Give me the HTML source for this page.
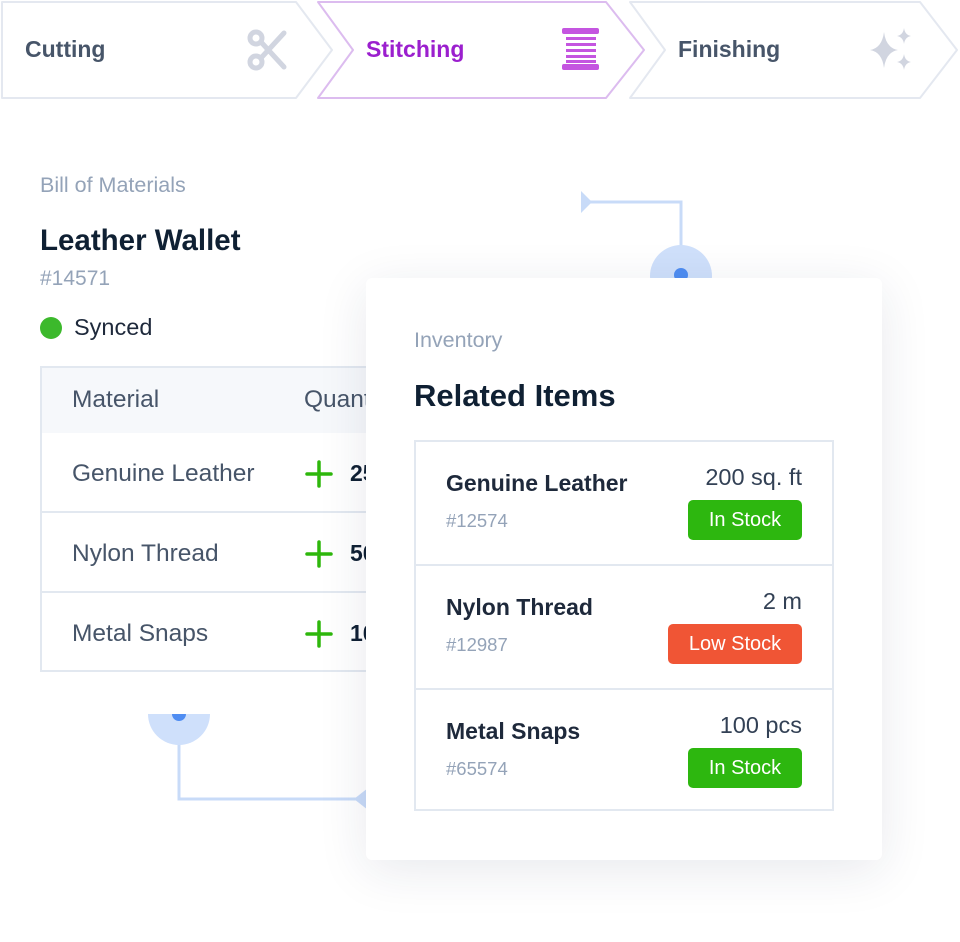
<!DOCTYPE html>
<html><head><meta charset="utf-8"><style>
body{margin:0;width:960px;height:942px;background:#fff;font-family:"Liberation Sans",sans-serif;position:relative;overflow:hidden}
.a{position:absolute;white-space:nowrap}
.t{font-size:24.5px;color:#475569}
</style></head><body>
<svg class="a" style="left:0;top:0" width="960" height="942">
<g fill="#fff" stroke-width="2" stroke-linejoin="round">
<polygon points="2,2 296,2 332,50 296,98 2,98" stroke="#e4e8f0"/>
<polygon points="318,2 606,2 644,50 606,98 318,98 353,50" stroke="#dcbcef"/>
<polygon points="630,2 920,2 957,50 920,98 630,98 665,50" stroke="#e4e8f0"/>
</g>
<g stroke="#d1d5e0" stroke-width="5" fill="none" stroke-linecap="round">
<circle cx="256" cy="38" r="6"/><circle cx="256" cy="62" r="6"/>
<line x1="261" y1="42" x2="284" y2="67"/><line x1="261" y1="58" x2="284" y2="33"/>
</g>
<g fill="#c455e0"><rect x="562" y="28" width="37" height="6" rx="2"/><rect x="562" y="64" width="37" height="6" rx="2"/>
<rect x="566" y="37" width="30" height="3"/><rect x="566" y="43" width="30" height="3"/><rect x="566" y="49" width="30" height="3"/><rect x="566" y="55" width="30" height="3"/><rect x="566" y="60" width="30" height="3"/></g>
<g fill="#d1d5e0"><path d="M884 32 Q886 48 898 50 Q886 52 884 68 Q882 52 870 50 Q882 48 884 32Z"/>
<path d="M904 28 Q905 35 911 36 Q905 37 904 44 Q903 37 897 36 Q903 35 904 28Z"/>
<path d="M904 54 Q905 61 911 62 Q905 63 904 70 Q903 63 897 62 Q903 61 904 54Z"/></g>
<g stroke="#c8dbf8" stroke-width="3" fill="none"><polyline points="590,202 681,202 681,272"/><polyline points="179,714 179,799 360,799"/></g>
<polygon points="581,191 581,213 592,202" fill="#c8dbf8"/>
<circle cx="681" cy="276" r="31" fill="#cfe0fb"/><circle cx="681" cy="275" r="7" fill="#4f8df2"/>
<path d="M148 714 A31 31 0 0 0 210 714Z" fill="#cfe0fb"/><path d="M172 714 A7 7 0 0 0 186 714Z" fill="#4f8df2"/>
<polygon points="354,799 368,788 368,810" fill="#c8dbf8"/>
<g stroke="#2eb70c" stroke-width="3.5" stroke-linecap="round">
<line x1="307" y1="474" x2="331" y2="474"/><line x1="319" y1="462" x2="319" y2="486"/>
<line x1="307" y1="554" x2="331" y2="554"/><line x1="319" y1="542" x2="319" y2="566"/>
<line x1="307" y1="634" x2="331" y2="634"/><line x1="319" y1="622" x2="319" y2="646"/>
</g>
</svg>
<div class="a" style="left:25px;top:36px;font-size:23px;font-weight:bold;color:#475569">Cutting</div>
<div class="a" style="left:366px;top:36px;font-size:23px;font-weight:bold;color:#9b1fce">Stitching</div>
<div class="a" style="left:678px;top:36px;font-size:23px;font-weight:bold;color:#475569">Finishing</div>

<div class="a" style="left:40px;top:173px;font-size:21.5px;color:#94a3b8">Bill of Materials</div>
<div class="a" style="left:40px;top:224px;font-size:29.5px;font-weight:bold;color:#0f2033">Leather Wallet</div>
<div class="a" style="left:40px;top:267px;font-size:21px;color:#94a3b8">#14571</div>
<div class="a" style="left:40px;top:317px;width:22px;height:22px;border-radius:50%;background:#3cb92c"></div>
<div class="a" style="left:74px;top:314px;font-size:23.5px;color:#1e293b">Synced</div>

<div class="a" style="left:40px;top:366px;width:400px;height:306px;border:2px solid #e2e8f0;box-sizing:border-box">
<div style="height:65px;background:#f6f8fb"></div>
<div style="height:78px;border-bottom:2px solid #e2e8f0"></div>
<div style="height:78px;border-bottom:2px solid #e2e8f0"></div>
</div>
<div class="a t" style="left:72px;top:386px">Material</div>
<div class="a t" style="left:304px;top:386px">Quantity</div>
<div class="a t" style="left:72px;top:460px">Genuine Leather</div>
<div class="a t" style="left:72px;top:540px">Nylon Thread</div>
<div class="a t" style="left:72px;top:620px">Metal Snaps</div>
<div class="a" style="left:350px;top:460px;font-size:23px;font-weight:bold;color:#0f2033">25</div>
<div class="a" style="left:350px;top:540px;font-size:23px;font-weight:bold;color:#0f2033">50</div>
<div class="a" style="left:350px;top:620px;font-size:23px;font-weight:bold;color:#0f2033">10</div>

<div class="a" style="left:366px;top:278px;width:516px;height:582px;background:#fff;border-radius:6px;box-shadow:0 10px 50px rgba(30,40,80,0.10)"></div>
<div class="a" style="left:414px;top:328px;font-size:21.5px;color:#94a3b8">Inventory</div>
<div class="a" style="left:414px;top:378px;font-size:31px;font-weight:bold;color:#0f2033">Related Items</div>
<div class="a" style="left:414px;top:440px;width:420px;height:371px;border:2px solid #e2e8f0;box-sizing:border-box">
<div style="height:122px;border-bottom:2px solid #e2e8f0"></div>
<div style="height:122px;border-bottom:2px solid #e2e8f0"></div>
</div>
<div class="a" style="left:446px;top:470px;font-size:23px;font-weight:bold;color:#1e293b">Genuine Leather</div>
<div class="a" style="left:446px;top:510px;font-size:18.5px;color:#94a3b8">#12574</div>
<div class="a" style="left:600px;top:464px;width:202px;text-align:right;font-size:23.5px;color:#334155">200 sq. ft</div>
<div class="a" style="left:688px;top:500px;width:114px;height:40px;border-radius:5px;background:#2db70f;color:#fff;font-size:20px;line-height:40px;text-align:center">In Stock</div>

<div class="a" style="left:446px;top:594px;font-size:23px;font-weight:bold;color:#1e293b">Nylon Thread</div>
<div class="a" style="left:446px;top:634px;font-size:18.5px;color:#94a3b8">#12987</div>
<div class="a" style="left:600px;top:588px;width:202px;text-align:right;font-size:23.5px;color:#334155">2 m</div>
<div class="a" style="left:668px;top:624px;width:134px;height:40px;border-radius:5px;background:#f05535;color:#fff;font-size:20px;line-height:40px;text-align:center">Low Stock</div>

<div class="a" style="left:446px;top:718px;font-size:23px;font-weight:bold;color:#1e293b">Metal Snaps</div>
<div class="a" style="left:446px;top:758px;font-size:18.5px;color:#94a3b8">#65574</div>
<div class="a" style="left:600px;top:712px;width:202px;text-align:right;font-size:23.5px;color:#334155">100 pcs</div>
<div class="a" style="left:688px;top:748px;width:114px;height:40px;border-radius:5px;background:#2db70f;color:#fff;font-size:20px;line-height:40px;text-align:center">In Stock</div>
</body></html>
